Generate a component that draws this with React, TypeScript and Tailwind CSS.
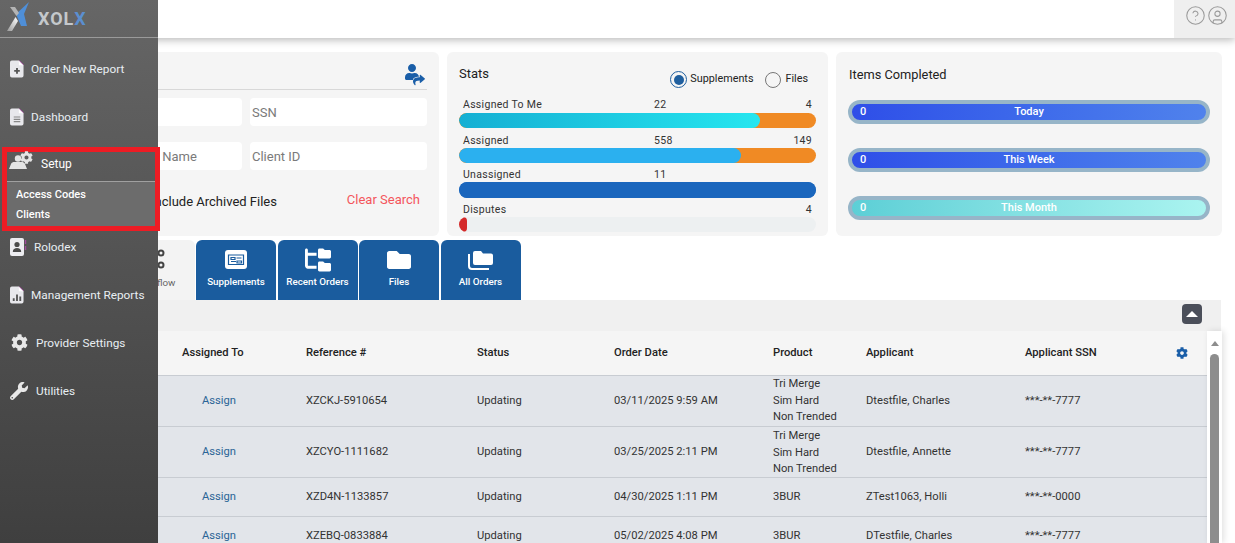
import React from 'react';
import { CircleHelp, CircleUser } from 'lucide-react';
import { FaCog, FaFolder, FaShare, FaUser, FaWrench } from 'react-icons/fa';
import { FaFolderTree } from 'react-icons/fa6';

const DocIcon = ({ kind }: { kind: 'plus' | 'lines' | 'bars' }) => (
    <svg width="14" height="18" viewBox="0 0 15 19" className="-mt-[3px]">
        <path d="M2 0.5h7.5l5 5v11a2 2 0 0 1-2 2H2a2 2 0 0 1-2-2v-14a2 2 0 0 1 2-2z" fill="#e8e8ec" />
        <path d="M9.5 0.5l5 5h-5z" fill="#fff" />
        <path d="M10 0.5l4.5 4.5" stroke="#a04a9c" strokeWidth="1" fill="none" />
        {kind === 'plus' && <path d="M7.5 8.5v6M4.5 11.5h6" stroke="#555" strokeWidth="2" />}
        {kind === 'lines' && <path d="M4 9.5h7M4 12h7M4 14.5h7" stroke="#888" strokeWidth="1.2" />}
        {kind === 'bars' && <path d="M4 16v-3M7.5 16v-7M11 16v-5" stroke="#555" strokeWidth="2" />}
    </svg>
);

const RolodexIcon = () => (
    <svg width="17" height="18" viewBox="0 0 17 18" className="-mt-[3px]">
        <rect x="0" y="0" width="14" height="18" rx="2" fill="#ececf0" />
        <circle cx="7" cy="6.5" r="2.6" fill="#4a4a4a" />
        <path d="M2.8 14c0-3 2-4 4.2-4s4.2 1 4.2 4z" fill="#4a4a4a" />
        <path d="M15.5 2v4M15.5 8v4" stroke="#a04a9c" strokeWidth="1.4" />
    </svg>
);

const LogoMark = () => (
    <svg width="23" height="31" viewBox="0 0 23 31" className="-mt-1">
        <defs>
            <linearGradient id="logoLow" x1="0" y1="1" x2="1" y2="0">
                <stop offset="0" stopColor="#9c9c9c" />
                <stop offset="1" stopColor="#ffffff" />
            </linearGradient>
        </defs>
        <path d="M22 1L9 13l5 12h6l-3-12z" fill="#4f8fd8" />
        <path d="M3 6h5l4 6-2.500 3z" fill="#b4b4b4" />
        <path d="M0 30L8.500 16 11 20 5 30z" fill="url(#logoLow)" />
    </svg>
);

// person with a gear over the shoulder
const SetupIcon = () => (
    <span className="relative -mt-[1px] block h-[18px] w-[24px] shrink-0 text-[#e4e4e4]">
        <svg width="18" height="14" viewBox="0 0 18 14" className="absolute bottom-0 left-0">
            <circle cx="9" cy="3.500" r="3.200" fill="currentColor" />
            <path d="M0 14l2-5c.5-1.500 2-2 3.500-2h7c1.500 0 3 .5 3.500 2l2 5z" fill="currentColor" />
        </svg>
        <FaCog size={13} className="absolute right-0 top-0" />
    </span>
);

const navClass = 'flex h-12 items-center text-[11.800px] text-[#e8eef2]';

const Sidebar = () => (
    <aside className="absolute left-0 top-0 z-10 h-full w-[158px] bg-gradient-to-b from-[#666666] to-[#3f3f3f] font-['Roboto',sans-serif]">
        <div className="flex h-[38px] items-center gap-[8px] border-b border-[#9a9a9a] pl-[7px]">
            <LogoMark />
            <span className="text-[18px] font-bold tracking-[1px] text-[#c4c8cc]">
                XOL<span className="text-[#5b8fd0]">X</span>
            </span>
        </div>
        <nav className="pt-[8px]">
            <a className={`${navClass} gap-[7px] pl-[10px]`}><DocIcon kind="plus" /><span>Order New Report</span></a>
            <a className={`${navClass} gap-[7px] pl-[10px]`}><DocIcon kind="lines" /><span>Dashboard</span></a>
            {/* highlighted setup group, red frame sticks out past the sidebar edge */}
            <div className="relative mb-[-7px] ml-[2px] mt-[5px] w-[158px] border-[5px] border-[#ed1c24]">
                <div className="flex h-[30px] items-start gap-[8px] border-b border-[#a0a0a0] pl-[2px] text-[12px] text-white">
                    <SetupIcon />
                    <span className="mt-[3px]">Setup</span>
                </div>
                <div className="flex h-[44px] flex-col bg-[#6c6c6c] pl-[9px] pt-[3px] text-[11px] font-medium text-white">
                    <span className="flex h-5 items-center">Access Codes</span>
                    <span className="flex h-5 items-center">Clients</span>
                </div>
            </div>
            <a className={`${navClass} gap-[7px] pl-[10px]`}><RolodexIcon /><span>Rolodex</span></a>
            <a className={`${navClass} gap-[7px] pl-[10px]`}><DocIcon kind="bars" /><span>Management Reports</span></a>
            <a className={`${navClass} gap-[8px] pl-[11px]`}><FaCog size={17} className="-mt-[3px] text-[#e8e8e8]" /><span>Provider Settings</span></a>
            <a className={`${navClass} gap-[8px] pl-[10px]`}><FaWrench size={18} className="-mt-[3px] text-[#e8e8e8]" /><span>Utilities</span></a>
        </nav>
    </aside>
);

const SearchPanel = () => (
    <section className="h-[184px] w-[425px] shrink-0 rounded-md bg-[#f5f5f5] pl-[51px] pr-3 pt-[13px]">
        <div className="flex h-[25px] items-start justify-end border-b border-[#d8d8d8] pr-[2px]">
            <span className="relative -mt-[1px] block h-[22px] w-[21px] text-[#1a5ea8]">
                <FaUser size={16} className="absolute left-0 top-0" />
                <FaShare size={12} stroke="#f5f5f5" strokeWidth={60} className="absolute bottom-0 right-0 [paint-order:stroke]" />
            </span>
        </div>
        <div className="mt-[8px] grid grid-cols-[177px_177px] gap-x-2 gap-y-4">
            <input placeholder="Reference #" className="h-7 rounded bg-white px-[2px] text-[13px] placeholder:text-[#7a7a7a]" />
            <input placeholder="SSN" className="h-7 rounded bg-white px-[2px] text-[13px] placeholder:text-[#7a7a7a]" />
            <input placeholder="Applicant Last Name" className="h-7 rounded bg-white pl-[11px] text-[13px] placeholder:text-[#7a7a7a]" />
            <input placeholder="Client ID" className="h-7 rounded bg-white px-[2px] text-[13px] placeholder:text-[#7a7a7a]" />
        </div>
        <div className="mt-[20px] flex items-start justify-between pl-[86px] pr-[7px]">
            <span className="mt-[2px] text-[13px] text-[#222]">Include Archived Files</span>
            <button className="text-[13px] text-[#f4555c]">Clear Search</button>
        </div>
    </section>
);

const statRows = [
    { label: 'Assigned To Me', a: '22', b: '4', fill: 'w-[301px] bg-gradient-to-r from-[#15afd3] to-[#26e6ef]', track: 'bg-[#f08a24]', h: 'h-[15px]', gap: 'mb-[4px]', pad: '' },
    { label: 'Assigned', a: '558', b: '149', fill: 'w-[282px] bg-[#2bb0ef]', track: 'bg-[#f08a24]', h: 'h-[15px]', gap: 'mb-[3px]', pad: 'pt-px' },
    { label: 'Unassigned', a: '11', b: '', fill: 'w-full bg-[#1a66bd]', track: 'bg-[#1a66bd]', h: 'h-4', gap: 'mb-[3px]', pad: 'pt-px' },
    { label: 'Disputes', a: '', b: '4', fill: 'w-2 bg-[#d42a2a]', track: 'bg-[#edf0f1]', h: 'h-[15px]', gap: '', pad: 'pt-[2px]' },
];

const StatsPanel = () => (
    <section className="h-[184px] w-[381px] shrink-0 rounded-md bg-[#f5f5f5] px-3 pt-[13px]">
        <div className="flex h-[32px] items-start justify-between">
            <span className="-mt-px text-[13px] text-[#222]">Stats</span>
            <div className="mr-[8px] mt-[6px] flex items-center text-[10.800px] text-[#222]">
                <span className="flex h-[17px] w-[17px] items-center justify-center rounded-full border border-[#1f5f9f]">
                    <span className="h-[10px] w-[10px] rounded-full bg-[#1f5f9f]" />
                </span>
                <span className="ml-[3px]">Supplements</span>
                <span className="ml-[12px] h-[16px] w-[16px] rounded-full border border-[#777]" />
                <span className="ml-[4px]">Files</span>
            </div>
        </div>
        <div className="flex flex-col">
            {statRows.map((row) => (
                <div key={row.label} className={row.gap}>
                    <div className={`${row.pad} relative flex h-[16px] items-center justify-between px-[4px] text-[10.500px] tracking-[0.3px] text-[#333]`}>
                        <span>{row.label}</span>
                        <span className="absolute left-[195px]">{row.a}</span>
                        <span>{row.b}</span>
                    </div>
                    <div className={`${row.h} ${row.track} overflow-hidden rounded-full`}>
                        <div className={`${row.fill} h-full rounded-full`} />
                    </div>
                </div>
            ))}
        </div>
    </section>
);

const pills = [
    { label: 'Today', fill: 'from-[#2f4ee8] to-[#5082ec]' },
    { label: 'This Week', fill: 'from-[#2f4ee8] to-[#5082ec]' },
    { label: 'This Month', fill: 'from-[#5ccfd6] to-[#aaf4f0]' },
];

const ItemsPanel = () => (
    <section className="h-[184px] w-[386px] shrink-0 rounded-md bg-[#f5f5f5] pl-3 pr-3 pt-[13px]">
        <div className="h-5 pl-px text-[12.800px] text-[#222]">Items Completed</div>
        <div className="mt-[15px] flex flex-col gap-6">
            {pills.map((p) => (
                <div key={p.label} className={`relative flex h-6 items-center justify-center rounded-full border-4 border-[#97b5c8] bg-gradient-to-r ${p.fill} text-[11px] font-medium text-white`}>
                    <span className="absolute left-2">0</span>
                    <span>{p.label}</span>
                </div>
            ))}
        </div>
    </section>
);

const SupplementsIcon = () => (
    <svg width="22" height="20" viewBox="0 0 22 20">
        <rect x="0" y="0" width="22" height="19" rx="3" fill="#fff" />
        <path d="M3.5 5h15v9.500h-15z" fill="none" stroke="#1a5c9e" strokeWidth="1.200" />
        <path d="M6 7.500h4v2H6zM11.500 8h5M6 11.500h5M12 11h4.500v2H12z" stroke="#1a5c9e" strokeWidth="1.200" fill="none" />
    </svg>
);

const AllOrdersIcon = () => (
    <svg width="25" height="20" viewBox="0 0 25 20">
        <path d="M7 1h6l2 2.500h8a2 2 0 0 1 2 2V13a2 2 0 0 1-2 2H7a2 2 0 0 1-2-2V3a2 2 0 0 1 2-2z" fill="#fff" />
        <path d="M1 4v12a3 3 0 0 0 3 3h17" fill="none" stroke="#fff" strokeWidth="2" />
    </svg>
);

const WorkflowIcon = () => (
    <svg width="22" height="22" viewBox="0 0 22 22" fill="none" stroke="#444" strokeWidth="2">
        <circle cx="4" cy="11" r="2.500" />
        <circle cx="17" cy="5" r="2.500" />
        <circle cx="17" cy="17" r="2.500" />
        <path d="M6 10l9-4M6 12l9 4" strokeWidth="1" />
    </svg>
);

const blueTabs = [
    { label: 'Supplements', icon: <SupplementsIcon /> },
    { label: 'Recent Orders', icon: <FaFolderTree size={26} /> },
    { label: 'Files', icon: <FaFolder size={24} /> },
    { label: 'All Orders', icon: <AllOrdersIcon /> },
];

const Tabs = () => (
    <div className="mt-1 flex h-[60px] pl-[101px]">
        <div className="flex w-[80px] flex-col items-center rounded-t-md bg-[#f3f3f3] pt-[1px] text-[9.800px] text-[#666]">
            <div className="flex h-[36px] items-center"><WorkflowIcon /></div>
            <span className="-mt-[1px]">Workflow</span>
        </div>
        <div className="ml-px flex gap-[1.500px]">
            {blueTabs.map((t) => (
                <div key={t.label} className="flex w-[80px] flex-col items-center rounded-t-md bg-[#1a5c9e] text-[9.800px] font-medium text-white">
                    <div className="flex h-[37px] items-center pt-[2px]">{t.icon}</div>
                    <span className="-mt-[2px]">{t.label}</span>
                </div>
            ))}
        </div>
    </div>
);

const rows = [
    { ref: 'XZCKJ-5910654', date: '03/11/2025 9:59 AM', product: ['Tri Merge', 'Sim Hard', 'Non Trended'], applicant: 'Dtestfile, Charles', ssn: '***-**-7777', h: 'h-[51px]' },
    { ref: 'XZCYO-1111682', date: '03/25/2025 2:11 PM', product: ['Tri Merge', 'Sim Hard', 'Non Trended'], applicant: 'Dtestfile, Annette', ssn: '***-**-7777', h: 'h-[51px] pt-px' },
    { ref: 'XZD4N-1133857', date: '04/30/2025 1:11 PM', product: ['3BUR'], applicant: 'ZTest1063, Holli', ssn: '***-**-0000', h: 'h-[39px] pt-px' },
    { ref: 'XZEBQ-0833884', date: '05/02/2025 4:08 PM', product: ['3BUR'], applicant: 'DTestfile, Charles', ssn: '***-**-7777', h: 'h-[39px]' },
];

const gridCols = 'grid grid-cols-[168px_124px_171px_137px_159px_93px_159px_157px_25px] items-center';

const OrdersTable = () => (
    <div className="flex">
        <div className="w-[1193px] shrink-0">
            <div className={`${gridCols} h-[45px] border-b border-[#c8ccd2] bg-[#f5f5f5] text-[11.200px] font-medium text-[#222]`}>
                <span />
                <span>Assigned To</span>
                <span>Reference #</span>
                <span>Status</span>
                <span>Order Date</span>
                <span>Product</span>
                <span>Applicant</span>
                <span>Applicant SSN</span>
                <FaCog size={12} className="-ml-[6px] text-[#1a5ea8]" />
            </div>
            {rows.map((row) => (
                <div key={row.ref} className={`${gridCols} ${row.h} border-b border-[#c8ccd2] bg-[#e2e5ea] text-[11.200px] text-[#333]`}>
                    <span />
                    <span className="pl-[20px] text-[#2a6496]">Assign</span>
                    <span>{row.ref}</span>
                    <span>Updating</span>
                    <span>{row.date}</span>
                    <span className="leading-[16.500px]">
                        {row.product.map((p) => <span key={p} className="block">{p}</span>)}
                    </span>
                    <span>{row.applicant}</span>
                    <span>{row.ssn}</span>
                    <span />
                </div>
            ))}
        </div>
        <div className="flex h-[212px] w-[15px] shrink-0 flex-col items-center bg-white shadow-[2px_0_6px_rgba(0,0,0,0.12)]">
            <span className="mt-[10px] h-0 w-0 border-x-[4px] border-b-[5px] border-x-transparent border-b-[#8d8d8d]" />
            <span className="mt-[8px] w-[9px] flex-1 rounded-t-full bg-[#8d8d8d]" />
        </div>
    </div>
);

export default function App() {
    return (
        <div className="relative h-screen overflow-hidden bg-white font-['Roboto',sans-serif]">
            <Sidebar />
            <header className="flex h-[38px] justify-end shadow-[0_2px_8px_rgba(0,0,0,0.28)]">
                <div className="flex w-[61px] items-start gap-px bg-[#efefef] pl-[11px] pt-[5px] text-[#9a9a9a]">
                    <CircleHelp size={21} strokeWidth={1.200} />
                    <CircleUser size={21} strokeWidth={1.200} />
                </div>
            </header>
            <main className="pl-[14px]">
                <div className="mt-[14px] flex gap-2">
                    <SearchPanel />
                    <StatsPanel />
                    <ItemsPanel />
                </div>
                <Tabs />
                <div className="flex h-[31px] w-[1207px] items-start justify-end bg-[#f0f0f0] pr-[19px] pt-1">
                    <button className="flex h-5 w-5 items-center justify-center rounded bg-[#4b4f5a]">
                        <span className="h-0 w-0 border-x-[6px] border-b-[6px] border-x-transparent border-b-white" />
                    </button>
                </div>
                <OrdersTable />
            </main>
        </div>
    );
}
